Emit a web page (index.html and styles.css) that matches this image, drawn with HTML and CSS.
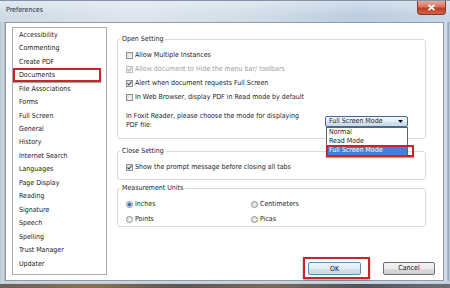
FILE: index.html
```html
<!DOCTYPE html>
<html>
<head>
<meta charset="utf-8">
<title>Preferences</title>
<link rel="stylesheet" href="styles.css">
</head>
<body>
<div class="window">
  <div class="titlebar">
    <span class="title">Preferences</span>
    <div class="close"><svg width="9" height="7" viewBox="0 0 9 7"><path d="M1.5 0.8 L7.5 6.2 M7.5 0.8 L1.5 6.2" stroke="#fff" stroke-width="1.7"/></svg></div>
  </div>
  <div class="middle">
    <div class="frame-l"></div>
    <div class="content">
      <ul class="cats">
        <li>Accessibility</li>
        <li>Commenting</li>
        <li>Create PDF</li>
        <li class="sel">Documents</li>
        <li>File Associations</li>
        <li>Forms</li>
        <li>Full Screen</li>
        <li>General</li>
        <li>History</li>
        <li>Internet Search</li>
        <li>Languages</li>
        <li>Page Display</li>
        <li>Reading</li>
        <li>Signature</li>
        <li>Speech</li>
        <li>Spelling</li>
        <li>Trust Manager</li>
        <li>Updater</li>
      </ul>
      <div class="panel">
        <div class="group g-open">
          <div class="legend">Open Setting</div>
          <div class="opts">
            <div class="opt"><span class="cb"></span>Allow Multiple Instances</div>
            <div class="opt disabled"><span class="cb"><svg width="5" height="5" viewBox="0 0 5 5"><path d="M0.5 2.5 L2 4 L4.6 0.6" fill="none" stroke="#a9b0ba" stroke-width="1.1"/></svg></span>Allow document to Hide the menu bar/ toolbars</div>
            <div class="opt"><span class="cb"><svg width="5" height="5" viewBox="0 0 5 5"><path d="M0.5 2.5 L2 4 L4.6 0.6" fill="none" stroke="#37476a" stroke-width="1.1"/></svg></span>Alert when document requests Full Screen</div>
            <div class="opt"><span class="cb"></span>In Web Browser, display PDF in Read mode by default</div>
          </div>
          <div class="mode-row">
            <div class="mode-text">In Foxit Reader, please choose the mode for displaying PDF file:</div>
            <div class="select">
              <span class="select-val">Full Screen Mode</span>
              <svg class="arrow" width="5" height="3" viewBox="0 0 5 3"><path d="M0 0 H5 L2.5 3 Z" fill="#111"/></svg>
              <ul class="dropdown">
                <li>Normal</li>
                <li>Read Mode</li>
                <li class="hl">Full Screen Mode<span class="ann"></span></li>
              </ul>
            </div>
          </div>
        </div>
        <div class="group g-close">
          <div class="legend">Close Setting</div>
          <div class="opts">
            <div class="opt"><span class="cb"><svg width="5" height="5" viewBox="0 0 5 5"><path d="M0.5 2.5 L2 4 L4.6 0.6" fill="none" stroke="#37476a" stroke-width="1.1"/></svg></span>Show the prompt message before closing all tabs</div>
          </div>
        </div>
        <div class="group g-units">
          <div class="legend">Measurement Units</div>
          <div class="units">
            <div class="opt"><span class="rb on"></span>Inches</div>
            <div class="opt"><span class="rb"></span>Centimeters</div>
            <div class="opt"><span class="rb"></span>Points</div>
            <div class="opt"><span class="rb"></span>Picas</div>
          </div>
        </div>
        <div class="actions">
          <div class="ok-mark"><div class="btn ok">OK</div></div>
          <div class="btn cancel">Cancel</div>
        </div>
      </div>
    </div>
    <div class="frame-r"></div>
  </div>
  <div class="frame-b"></div>
</div>
</body>
</html>
```

FILE: styles.css
```css
* { box-sizing: border-box; margin: 0; padding: 0; }
html, body { width: 450px; height: 288px; overflow: hidden; }
body {
  font-family: "DejaVu Sans Condensed", "DejaVu Sans", "Liberation Sans", sans-serif;
  font-size: 7px;
  color: #1c1c1c;
  background: #a9b8c8;
}
.window {
  width: 450px;
  height: 288px;
  display: flex;
  flex-direction: column;
}
.titlebar {
  height: 22px;
  display: flex;
  justify-content: space-between;
  align-items: flex-start;
  border-top: 1px solid #8193a8;
  background:
    linear-gradient(to bottom, rgba(255,255,255,0.35), rgba(255,255,255,0) 70%),
    linear-gradient(to right, #cfdae6, #dde5ee 30%, #d2dde8 55%, #bccde0 80%, #c9d7e6);
}
.title {
  padding: 5px 0 0 6px;
  line-height: 8px;
  color: #1e2a38;
}
.close {
  width: 29px;
  height: 14px;
  margin-right: 4px;
  border: 1px solid #84392c;
  border-top: none;
  border-radius: 0 0 4px 4px;
  background: linear-gradient(to bottom, #e7ab9b, #d7745c 45%, #c13d22 55%, #d0634a);
  display: flex;
  align-items: center;
  justify-content: center;
}
.middle {
  flex: 1;
  display: flex;
}
.frame-l {
  width: 5px;
  background: linear-gradient(to right, #b4c2d1, #d3dce6 60%, #a3b1c0);
}
.frame-r {
  width: 6px;
  background: linear-gradient(to right, #c2d0de, #dfe7f0 35%, #8ea4bc 70%, #c3d2e2);
}
.frame-b {
  height: 7px;
  background:
    linear-gradient(to bottom, #cdd5de 0, #c3ccd6 3px, rgba(0,0,0,0) 3px),
    linear-gradient(to right, #6a6058, #8c6f50 20%, #5c5651 40%, #7c6a58 60%, #525359 80%, #6b7078);
}
.content {
  flex: 1;
  background: #fff;
  border: 1px solid #8d9bab;
  display: flex;
  padding: 4px 0 0 6px;
}
.cats {
  width: 95px;
  height: 248px;
  border: 1px solid #a6adb6;
  list-style: none;
  background: #fff;
}
.cats li {
  height: 13.47px;
  display: flex;
  align-items: center;
  padding-left: 6px;
  color: #1a1a1a;
}
.cats li.sel {
  width: 88px;
  border: 2px solid #c9232d;
  padding-left: 4px;
  box-shadow: 0 1px 1px rgba(0,0,0,0.35);
}
.panel {
  flex: 1;
  display: flex;
  flex-direction: column;
  margin-left: 10px;
  padding-right: 7px;
}
.group {
  border: 1px solid #d5dbe1;
  border-radius: 3px;
  margin-right: 10px;
  padding: 0 8px;
}
.legend {
  width: fit-content;
  margin: -5px 0 0 -6px;
  padding: 0 2px;
  background: #fff;
  line-height: 9px;
  color: #1e1e1e;
}
.g-open { margin-top: 12px; padding-bottom: 8px; }
.g-close { margin-top: 12px; padding-bottom: 5px; }
.g-units { margin-top: 8px; padding-bottom: 0; }
.opts { margin-top: 4px; }
.opt {
  display: flex;
  align-items: center;
  height: 14px;
  gap: 2px;
  white-space: nowrap;
}
.opt.disabled { color: #9c9c9c; }
.cb {
  width: 7px;
  height: 7px;
  border: 1px solid #8e8f8f;
  background: linear-gradient(135deg, #dcdcdc, #f7f7f7);
  display: flex;
  align-items: center;
  justify-content: center;
  flex: none;
}
.disabled .cb { border-color: #bcbcbc; background: #f4f4f4; }
.rb {
  width: 7px;
  height: 7px;
  border: 1px solid #8e8f8f;
  border-radius: 50%;
  background: radial-gradient(circle at 60% 60%, #f4f4f4, #d6d6d6);
  flex: none;
}
.rb.on {
  background: radial-gradient(circle, #1f4f9a 0, #4a82cc 1.5px, #d9e3ef 2.2px, #e6e6e6 3px);
}
.mode-row {
  margin-top: 8px;
  display: flex;
  align-items: center;
}
.mode-text {
  width: 185px;
  line-height: 9px;
}
.select {
  position: relative;
  margin-left: 14px;
  width: 83px;
  height: 11px;
  border: 1px solid #3e6c9f;
  border-radius: 2px;
  background: linear-gradient(to bottom, #f3f8fc, #e3edf6 50%, #d3e2ef 51%, #c9dbea);
  display: flex;
  align-items: center;
  justify-content: space-between;
  padding: 0 4px 0 3px;
  color: #1a1a1a;
}
.select-val { line-height: 9px; }
.dropdown {
  position: absolute;
  top: 10px;
  left: 0;
  width: 82px;
  border: 1px solid #646464;
  background: #fff;
  list-style: none;
  z-index: 2;
}
.dropdown li {
  height: 9px;
  line-height: 9px;
  padding-left: 2px;
  position: relative;
}
.dropdown li.hl {
  background: #3d83d9;
  color: #fff;
}
.ann {
  position: absolute;
  left: -1px;
  right: -7px;
  top: -1px;
  bottom: -2px;
  border: 2px solid #cc2229;
  box-shadow: 0 1px 1px rgba(0,0,0,0.35);
}
.units {
  margin-top: 4px;
  display: grid;
  grid-template-columns: 125px 1fr;
  row-gap: 1px;
}
.actions {
  margin-top: auto;
  margin-bottom: 1px;
  display: flex;
  justify-content: flex-end;
  align-items: center;
  gap: 13px;
  padding-right: 1px;
}
.ok-mark {
  border: 2px solid #c9232d;
  padding: 3px 7px 2px 3px;
  box-shadow: 0 1px 2px rgba(0,0,0,0.4);
}
.btn {
  height: 13px;
  border: 1px solid #707070;
  border-radius: 2px;
  background: linear-gradient(to bottom, #f2f2f2 0, #ebebeb 50%, #dddddd 50%, #cfcfcf 100%);
  display: flex;
  align-items: center;
  justify-content: center;
  color: #111;
}
.btn.ok {
  width: 53px;
  border-color: #5a8db8;
  background: linear-gradient(to bottom, #f1f6fa 0, #e4edf4 50%, #d4e2ec 50%, #c7d8e5 100%);
}
.btn.cancel { width: 52px; }
```
